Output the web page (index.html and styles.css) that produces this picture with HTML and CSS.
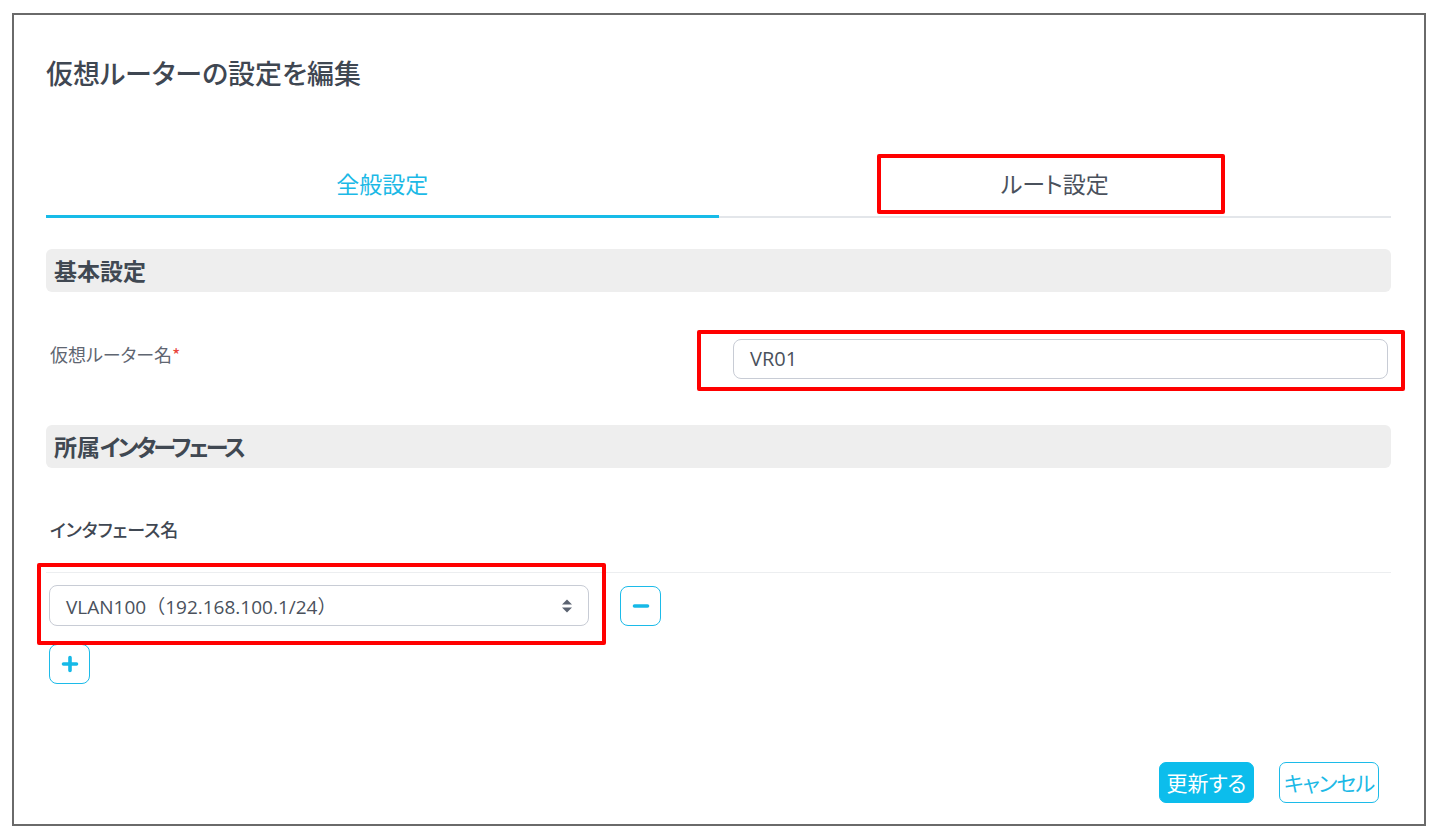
FILE: index.html
```html
<!DOCTYPE html>
<html lang="ja">
<head>
<meta charset="utf-8">
<title>仮想ルーターの設定を編集</title>
<link rel="stylesheet" href="styles.css">
</head>
<body>
<div class="frame">
  <h1 class="title">仮想ルーターの設定を編集</h1>
  <div class="tabs">
    <div class="tab active">全般設定</div>
    <div class="tab">ルート設定</div>
  </div>

  <div class="section-head">基本設定</div>
  <div class="field-row">
    <div class="field-label">仮想ルーター名<span class="req">*</span></div>
    <div class="field-control"><div class="input">VR01</div></div>
  </div>

  <div class="section-head second">所属<span class="kana">インターフェース</span></div>
  <div class="table-head">インタフェース名</div>
  <div class="if-row">
    <div class="select">
      <span>VLAN100（192.168.100.1/24）</span>
      <svg class="sel-arrows" width="12" height="16" viewBox="0 0 12 16"><path d="M6 1.5 L11 6.5 H1 Z" fill="#5b6270"/><path d="M6 14.5 L11 9.5 H1 Z" fill="#5b6270"/></svg>
    </div>
    <div class="icon-btn"><svg width="20" height="20" viewBox="0 0 20 20"><path d="M3.5 10 H16.5" stroke="#16b9e7" stroke-width="3.6" stroke-linecap="round"/></svg></div>
  </div>
  <div class="add-row">
    <div class="icon-btn"><svg width="20" height="20" viewBox="0 0 20 20"><path d="M3.5 10 H16.5 M10 3.5 V16.5" stroke="#16b9e7" stroke-width="3.6" stroke-linecap="round"/></svg></div>
  </div>

  <div class="footer">
    <div class="btn primary">更新する</div>
    <div class="btn outline">キャンセル</div>
  </div>

  <div class="mark mark-tab"></div>
  <div class="mark mark-input"></div>
  <div class="mark mark-select"></div>
</div>
</body>
</html>
```

FILE: styles.css
```css
html, body {
  margin: 0;
  padding: 0;
  background: #ffffff;
}
body {
  font-family: "Open Sans", "Noto Sans CJK JP", sans-serif;
  color: #414954;
}
.title,
.tab,
.section-head,
.field-label,
.table-head,
.btn {
  font-family: "Noto Sans CJK JP", sans-serif;
  font-feature-settings: "palt";
}
.frame {
  position: relative;
  box-sizing: border-box;
  margin: 13px 0 0 12px;
  width: 1414px;
  height: 813px;
  border: 2px solid #6a6a6a;
  padding: 40px 33px 21px 32px;
  display: flex;
  flex-direction: column;
}
.title {
  margin: 0;
  font-size: 27px;
  line-height: 36px;
  font-weight: 500;
  color: #3f4752;
}
.tabs {
  display: flex;
  align-items: flex-end;
  margin-top: 78px;
}
.tab {
  flex: 1 1 0;
  text-align: center;
  font-size: 23px;
  line-height: 28px;
  color: #4a515c;
  padding-bottom: 19px;
  border-bottom: 2px solid #e3e6ea;
}
.tab.active {
  color: #1cb9e6;
  padding-bottom: 18px;
  border-bottom: 3px solid #17bbe8;
}
.section-head {
  margin-top: 31px;
  height: 43px;
  box-sizing: border-box;
  background: #eeeeee;
  border-radius: 6px;
  padding-left: 8px;
  font-size: 23px;
  font-weight: 700;
  line-height: 43px;
  color: #404852;
}
.section-head.second {
  margin-top: 46px;
}
.kana {
  letter-spacing: -3px;
}
.field-row {
  display: flex;
  margin-top: 47px;
}
.field-label {
  flex: 0 0 687px;
  padding-left: 4px;
  box-sizing: border-box;
  font-size: 18px;
  line-height: 30px;
  color: #5f6671;
}
.req {
  color: #e8453c;
}
.field-control {
  flex: 1 1 auto;
  padding-right: 3px;
}
.input {
  box-sizing: border-box;
  height: 40px;
  border: 1.5px solid #c8ccd5;
  border-radius: 8px;
  padding-left: 16px;
  font-size: 20px;
  line-height: 37px;
  color: #4a515c;
}
.table-head {
  margin-top: 49px;
  padding-left: 4px;
  padding-bottom: 31px;
  border-bottom: 1px solid #eceef0;
  font-size: 18px;
  font-weight: 500;
  line-height: 24px;
  color: #3f4752;
}
.if-row {
  display: flex;
  align-items: center;
  gap: 31px;
  margin-top: 12px;
  padding-left: 3px;
}
.select {
  box-sizing: border-box;
  width: 540px;
  height: 41px;
  border: 1.5px solid #c8ccd5;
  border-radius: 8px;
  padding: 0 15px 0 16px;
  display: flex;
  align-items: center;
  justify-content: space-between;
  font-size: 19px;
  color: #4a515c;
}
.sel-arrows {
  display: block;
}
.icon-btn {
  box-sizing: border-box;
  width: 41px;
  height: 40px;
  border: 1.5px solid #1cbbe9;
  border-radius: 8px;
  display: flex;
  align-items: center;
  justify-content: center;
  background: #fff;
}
.add-row {
  margin-top: 18px;
  padding-left: 3px;
}
.footer {
  margin-top: auto;
  display: flex;
  justify-content: flex-end;
  gap: 25px;
  padding-right: 12px;
}
.btn {
  box-sizing: border-box;
  height: 41px;
  border-radius: 7px;
  font-size: 21px;
  line-height: 39px;
  text-align: center;
}
.btn.primary {
  width: 95px;
  background: #0cbdec;
  color: #ffffff;
  border: 1px solid #0cbdec;
}
.btn.outline {
  width: 100px;
  background: #ffffff;
  color: #1cb9e6;
  border: 1.5px solid #1cbbe9;
  letter-spacing: -1px;
}
.mark {
  position: absolute;
  box-sizing: border-box;
  border: 4px solid #ff0000;
  border-radius: 2px;
  pointer-events: none;
}
.mark-tab {
  left: 863px;
  top: 139px;
  width: 348px;
  height: 60px;
}
.mark-input {
  left: 683px;
  top: 315px;
  width: 708px;
  height: 61px;
}
.mark-select {
  left: 23px;
  top: 548px;
  width: 569px;
  height: 82px;
}
```
